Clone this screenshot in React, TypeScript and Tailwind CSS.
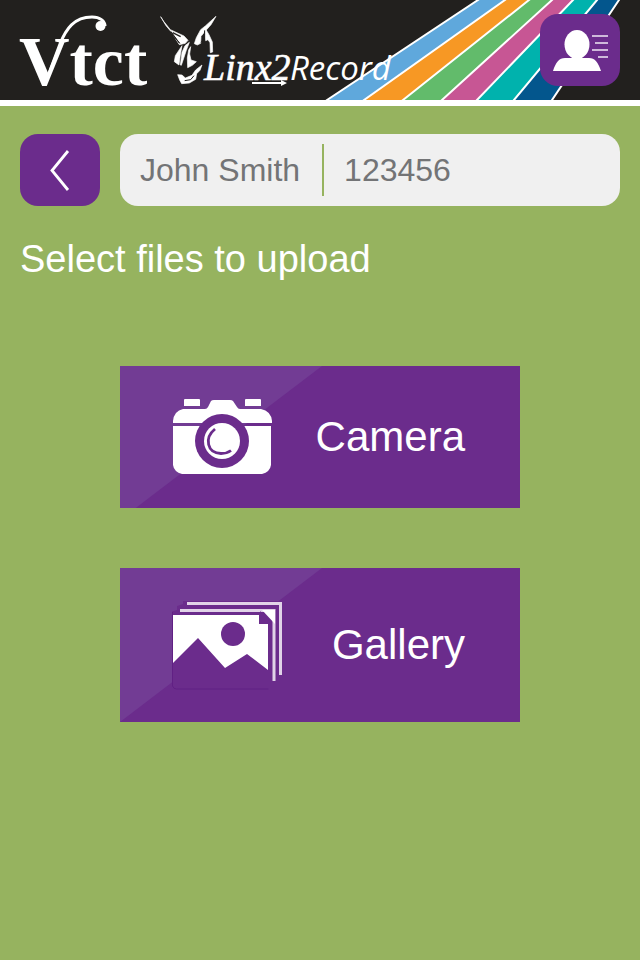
import type { ReactNode } from 'react';

const stripes = [
  { color: '#5fa8dc', points: '158,0 185,0 44,100 7,100' },
  { color: '#f79824', points: '185,0 209,0 83,100 44,100' },
  { color: '#62bb6b', points: '209,0 232,0 122,100 83,100' },
  { color: '#c75694', points: '232,0 253,0 157,100 122,100' },
  { color: '#00b2ad', points: '253,0 277,0 194,100 157,100' },
  { color: '#03568d', points: '277,0 299,0 232,100 194,100' },
];

function Stripes() {
  return (
    <svg className="absolute top-0 right-0 h-full" width="320" height="100" viewBox="0 0 320 100" aria-hidden="true">
      {stripes.map((stripe) => (
        <polygon key={stripe.color} points={stripe.points} fill={stripe.color} />
      ))}
      <path
        d="M158 0L7 100M185 0L44 100M209 0L83 100M232 0L122 100M253 0L157 100M277 0L194 100M299 0L232 100"
        stroke="#fff"
        strokeWidth="2"
        strokeLinecap="square"
      />
    </svg>
  );
}

function Logo() {
  return (
    <svg className="relative shrink-0" width="400" height="100" viewBox="0 0 400 100" fill="#fff" role="img" aria-label="Vtct Linx2Record">
      {/* Vtct, with a swash that carries on from the right arm of the V */}
      <text x="19" y="85" fontFamily="'Liberation Serif', serif" fontWeight="700" fontSize="70">Vtct</text>
      <path d="M48 76L60 44C66 29 74 17 92 17c8 0 13 4 13 9" fill="none" stroke="#fff" strokeWidth="3" />
      <circle cx="100.500" cy="26" r="5" />

      {/* Dragon head */}
      <g transform="translate(150 0) scale(.3333)" stroke="#fff" strokeWidth="2">
        <path d="M32 50l9 14 20 25 41 19 12 13-8 9-18 4-24-38-16-19-12-20z" />
        <path d="M63 95l26 35-20-24z" fill="#22201e" stroke="#22201e" strokeWidth="3" />
        <path d="M68 98l24 12" stroke="#22201e" strokeWidth="4" />
        <path d="M198 49l-15 25-15 17-15 18-1 21-10 5-9-4 6-18 13-24 15-12z" />
        <path d="M165 84l12 20 10 22 1 30-7 2-1-30-6-9-7 3z" />
        <path d="M164 91l-2 27-9 9" fill="none" stroke="#22201e" strokeWidth="3" />
        <path d="M96 137l-5 28-4 30-14-10 3-18z" />
        <path d="M118 127l-9 24-15 45-3-1 5-38 9-20z" />
        <path d="M122 140l-3 22 4 18 16 5-12 11-14 7-1-29 4-24z" />
        <path d="M83 224l13 1 10 9 20-8 11-16 19-15-6 16-10 10-3 17-19 11-23 2-6-11z" />
        <path d="M104 242l18-3 10-12" fill="none" stroke="#22201e" strokeWidth="3" />
      </g>

      <text x="204" y="80" fontFamily="'Liberation Serif', serif" fontStyle="italic" fontSize="38" stroke="#fff" strokeWidth="0.6">Linx2</text>
      <text x="290" y="80" fontFamily="'Open Sans', sans-serif" fontStyle="italic" fontSize="33">Record</text>
      <path d="M252 82h29v-2l6 3-6 3v-2h-29z" />
    </svg>
  );
}

function UserIcon() {
  return (
    <svg width="56" height="42" viewBox="0 0 56 42" fill="#fff" aria-hidden="true">
      <ellipse cx="25" cy="15.500" rx="12.500" ry="14.500" />
      <path d="M20 27h10v2q2 0 7 0c6 0 9 4 12 13H1c3-9 6-13 12-13q5 0 7 0z" />
      <path d="M40 7h16M43 14h13M40 21h16M46 28h10" stroke="#f0e8f4" strokeWidth="1.700" />
    </svg>
  );
}

function CameraIcon() {
  return (
    <svg className="relative" width="102" height="78" viewBox="0 0 102 78" aria-hidden="true">
      <g fill="#fff">
        <path d="M12 2q0-1 1-1h14q1 0 1 1v6H12zM73 2q0-1 1-1h14q1 0 1 1v6H73z" />
        <path d="M11 11h22q2 0 3-2l3-6q1-1 3-1h16q2 0 3 1l4 6q1 2 3 2h21q10 2 11 12v2H1v-2q1-10 10-12z" />
        <path d="M1 28h98v39q-1 7-9 9H10q-8-2-9-9z" />
      </g>
      <circle cx="50" cy="43" r="27" fill="#6b2c8c" />
      <circle cx="50" cy="43" r="18" fill="#fff" />
      <path d="M43 31C32 40 35 55 49 55.500q6 0 10-3" fill="none" stroke="#6b2c8c" strokeWidth="2.800" />
    </svg>
  );
}

function GalleryIcon() {
  return (
    <svg className="relative" width="114" height="90" viewBox="3 0 114 90" aria-hidden="true">
      <path d="M1 90V12l7-2V6l6-2V1h98v73l-5 1v6l-6 2v7z" fill="#6b2c8c" />
      <path d="M3.500 12v74q1 3 4 3h92" fill="none" stroke="#612084" />
      <path d="M18 3.500h93.500V75" fill="none" stroke="#e1d3e8" strokeWidth="3" />
      <path d="M11 10.500h94V81" fill="none" stroke="#e1d3e8" strokeWidth="3" />
      <path d="M93 10h13v14z" fill="#fff" />
      <path d="M91 11l11 12h-11z" fill="#6b2c8c" />
      <path d="M4 15h86v9h9v46L78 54 56 68 29 38 4 63z" fill="#fff" />
      <circle cx="64" cy="34" r="12" fill="#6b2c8c" />
    </svg>
  );
}

interface UploadButtonProps {
  label: string;
  icon: ReactNode;
}

function UploadButton({ label, icon }: UploadButtonProps) {
  return (
    <button
      type="button"
      className="relative flex w-full items-center justify-between overflow-hidden bg-[#6b2c8c] py-8 pr-[55px] pl-[52px] text-[42px] leading-none text-white"
    >
      <span className="absolute top-0 left-0 h-[154px] w-[202px] bg-[#723c94] [clip-path:polygon(0_0,100%_0,0_100%)]" />
      {icon}
      <span className="relative">{label}</span>
    </button>
  );
}

export default function App() {
  return (
    <div className="min-h-screen bg-[#96b35f] font-['Liberation_Sans',Arial,sans-serif]">
      {/* Header */}
      <header className="relative flex items-center justify-between border-b-[6px] border-white bg-[#22201e] pr-5">
        <Stripes />
        <Logo />
        <button
          type="button"
          aria-label="Profile"
          className="relative flex h-[72px] w-20 shrink-0 items-center justify-center rounded-[18px] bg-[#6b2c8c]"
        >
          <UserIcon />
        </button>
      </header>

      <main className="px-5 pt-7">
        {/* Learner bar */}
        <div className="flex gap-5">
          <button
            type="button"
            aria-label="Back"
            className="flex h-[72px] w-20 shrink-0 items-center justify-center rounded-[18px] bg-[#6b2c8c]"
          >
            <svg width="20" height="42" viewBox="0 0 20 42" fill="none" stroke="#fff" strokeWidth="2.800" aria-hidden="true">
              <path d="M18 2L2 21.500 18 41" />
            </svg>
          </button>
          <div className="flex h-[72px] grow items-center rounded-[18px] bg-[#f0f0f0] px-5 text-[32px] text-[#737476]">
            <span className="pr-[22px]">John Smith</span>
            <span className="flex h-[52px] items-center border-l-2 border-[#96b35f] pl-5">123456</span>
          </div>
        </div>

        <h1 className="mt-8 text-[38px] leading-[42px] text-white">Select files to upload</h1>

        {/* Upload sources */}
        <div className="mx-auto mt-[86px] flex w-2/3 flex-col gap-[60px]">
          <UploadButton label="Camera" icon={<CameraIcon />} />
          <UploadButton label="Gallery" icon={<GalleryIcon />} />
        </div>
      </main>
    </div>
  );
}
